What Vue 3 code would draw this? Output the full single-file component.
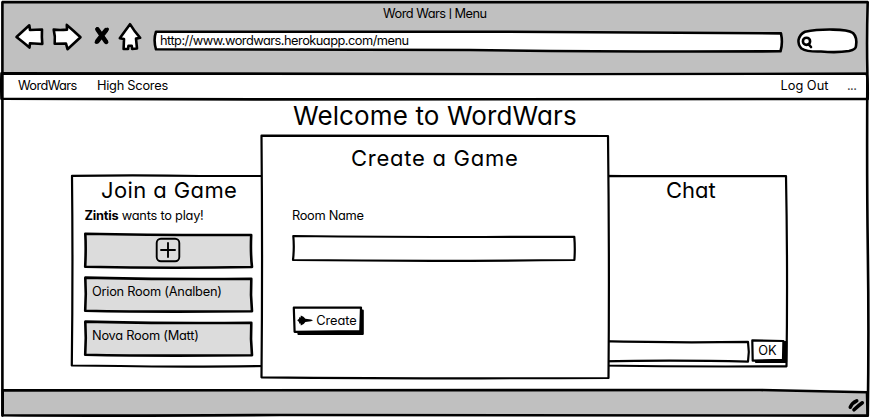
<script setup>
const rooms = [
  { id: 'orion', label: 'Orion Room (Analben)' },
  { id: 'nova', label: 'Nova Room (Matt)' },
]
</script>

<template>
  <div class="window">
    <header class="chrome">
      <div class="title">Word Wars <span class="bar-glyph">|</span> Menu</div>
      <div class="toolbar">
        <svg class="ink back" viewBox="14 22 32 30">
          <path class="paper" d="M16.5 37 L29.3 25.3 L30 30 Q36 29.8 42 29.5 Q41.6 37 42.3 44 L30 43.2 L29.5 47.6 Q23 42 16.5 37Z" />
        </svg>
        <svg class="ink forward" viewBox="51 22 32 30">
          <path class="paper" d="M53.7 29.6 Q60 30.4 67 29.6 L66.8 24.9 Q74 31 80.5 37.2 L67.5 49.2 L66 43.6 L54.7 43.8 Q55.4 36 53.7 29.6Z" />
        </svg>
        <svg class="ink stop" viewBox="92 22 20 30">
          <path d="M97 28.7 L106.7 42.3 M107.4 29.2 L96.2 42.2" />
          <path class="fat" d="M97.5 29.5 L106 41.8 M106 30.3 L97.3 41.2" />
        </svg>
        <svg class="ink home" viewBox="117 22 26 30">
          <path class="paper" d="M130 24.2 Q134 31 140.2 37.8 L136 38.6 L137 48.5 L132.2 49 L131.7 45.7 L128.5 45.7 L128 49 L123.6 49 L124 39 L119.8 38.2 Q125 31 130 24.2Z" />
        </svg>
        <div class="address">
          <svg class="ink cover" viewBox="154 31 629 21">
            <path class="paper" d="M156 31.7 Q330 32.3 500 31.7 Q650 32 781 33.4 Q783 43 780.5 51.3 Q600 52 470 50 L156 49.3 Q153.2 40 156 31.7Z" />
          </svg>
          <span class="url">http://www.wordwars.herokuapp.com/menu</span>
        </div>
        <svg class="ink search" viewBox="796 26 63 29">
          <path class="paper" d="M805 31.8 Q817 29.3 833 29.6 Q848 29.7 853 33 Q857.5 37.5 856 46 Q856 49.5 849 51 Q837 53 821 51.5 Q807 52 801.5 48.5 Q798 45 798.5 40 Q800 34 805 31.8Z" />
          <circle cx="806.5" cy="41.3" r="3.6" />
          <path d="M808.5 44.2 L811 47" />
        </svg>
      </div>
    </header>

    <nav class="menu">
      <svg class="ink cover" viewBox="0 72 870 28">
        <path class="paper" d="M1.5 73.4 Q300 72.6 580 74 L866.5 73.6 Q868 76 867.7 98.9 Q500 99.3 270 99.4 Q130 99.6 1.5 98.8 Q1 85 1.5 73.4Z" />
      </svg>
      <a class="brand">WordWars</a>
      <a class="scores">High Scores</a>
      <a class="logout">Log Out</a>
      <a class="more">...</a>
    </nav>

    <main>
      <h1>Welcome to WordWars</h1>
      <div class="lobby">
        <section class="panel join">
          <svg class="ink thin cover" viewBox="71 175 199 192">
            <path class="paper" d="M72 175.8 Q140 174.7 200 176 L270 176 V366 Q180 367.2 120 366 L71.8 365.5 Q73 270 72 175.8Z" />
          </svg>
          <h2>Join a Game</h2>
          <p class="invite"><b>Zintis</b> <span>wants to play!</span></p>
          <button class="room add">
            <svg class="ink cover" viewBox="0 0 169 35">
              <path class="shade" d="M1.3 0.8 Q70 2.3 167.2 2 Q166.4 20 168 34 Q85 35.6 1.2 33.7 Q2.1 15 1.3 0.8Z" />
            </svg>
            <svg class="plus" viewBox="0 0 26 26">
              <rect x="1.7" y="1.7" width="22.6" height="22.6" rx="4.2" />
              <path d="M13 5.3 V20.7 M5.3 13 H20.7" />
            </svg>
          </button>
          <button v-for="room in rooms" :key="room.id" class="room">
            <svg class="ink cover" viewBox="0 0 169 35">
              <path class="shade" d="M1.3 0.6 Q65 2.5 167.3 1.8 Q166.4 18 168 34.2 Q75 35.3 1.2 33.8 Q2.3 17 1.3 0.6Z" />
            </svg>
            <span>{{ room.label }}</span>
          </button>
        </section>

        <section class="panel chat">
          <svg class="ink thin cover" viewBox="600 175 188 192">
            <path class="paper" d="M600 175.8 Q680 176.5 786 176 Q787.8 270 786.5 366.3 Q690 367 600 365.5Z" />
          </svg>
          <h2>Chat</h2>
          <div class="composer">
            <div class="message">
              <svg class="ink thin cover" viewBox="600 340 149 23">
                <path class="paper" d="M600 341.2 Q680 343 748 341.8 Q749.6 352 748 361.6 Q680 360 600 361.3Z" />
              </svg>
            </div>
            <button class="ok">
              <svg class="ink thin cover" viewBox="751 339 37 26">
                <path class="solid" d="M756 343 L786.2 342 L786 362 L756 362Z" />
                <path class="paper" d="M752.3 340.4 L783.4 341 L783 359.8 L752.7 360.6Z" />
              </svg>
              <span>OK</span>
            </button>
          </div>
        </section>
      </div>
    </main>

    <footer class="status">
      <svg class="ink cover" viewBox="0 388 870 29">
        <path class="bar" d="M2.7 390.4 Q400 391 760 390 L867 392.3 L867.6 415.6 Q600 416 280 415 Q90 416 2.7 415.3Z" />
        <path class="grip" d="M850.3 407.2 Q852 402.8 856.7 400.8 M854 409.8 Q858.5 405.6 862.3 402.8" />
      </svg>
    </footer>

    <svg class="ink cover frame" viewBox="0 0 870 418">
      <path d="M2.7 2.3 H867.6 M867.7 2.3 Q866.6 40 867.4 72 Q866.7 170 867.8 250 Q869 330 867.8 415.6 M2.4 2.3 Q3.2 200 2.4 415.6" />
    </svg>

    <div class="dialog" role="dialog">
      <svg class="ink thin cover" viewBox="260 134 350 245">
        <path class="paper" d="M261.5 135.7 Q420 135.3 608 136 Q609.5 260 608.5 378 Q420 378.8 261.5 377.3 Q262.6 260 261.5 135.7Z" />
      </svg>
      <h2>Create a Game</h2>
      <label>Room Name</label>
      <div class="field">
        <svg class="ink thin cover" viewBox="292 235 284 27">
          <path class="paper" d="M293.3 236 Q420 237.4 574.3 236.8 Q575.2 248 574.4 260 Q430 261.6 293 260 Q294.4 248 293.3 236Z" />
        </svg>
      </div>
      <button class="create">
        <svg class="ink thin cover" viewBox="293 306 72 30">
          <path class="solid" d="M298.5 310.5 H362.7 V334 H298.5Z" />
          <path class="paper" d="M293.8 307.7 L361 307.5 L360.3 331 L294.6 331.8Z" />
        </svg>
        <svg class="jet" viewBox="297 315 17 13">
          <path d="M297.2 321.3 L299 319.8 L299.2 318.2 L300.6 318.4 L300.8 316.4 Q303.8 317.3 305.4 319.8 L311 320.4 L313 321.3 L311 322.2 L305.4 323 Q303.8 325.8 300.8 326.4 L300.6 324.4 L299.2 324.5 L299 323Z" />
        </svg>
        <span>Create</span>
      </button>
    </div>
  </div>
</template>

<style>
body { background: #fff; }
</style>

<style scoped>
.window {
  position: relative;
  display: flex;
  flex-direction: column;
  width: 870px;
  height: 418px;
  overflow: hidden;
  background: #fff;
  color: #000;
  font-family: Inter, "Liberation Sans", sans-serif;
  font-feature-settings: "cv11" 1;
  font-size: 12.8px;
  line-height: 16px;
  white-space: nowrap;
}
h1, h2, p { margin: 0; font-weight: 400; }
button {
  position: relative;
  display: flex;
  align-items: center;
  border: 0;
  padding: 0;
  background: none;
  color: inherit;
  font: inherit;
  font-feature-settings: inherit;
}
.ink {
  flex: none;
  overflow: visible;
  fill: none;
  stroke: #000;
  stroke-width: 2.6;
  stroke-linejoin: round;
  stroke-linecap: round;
}
.thin { stroke-width: 2.2; }
.cover { position: absolute; inset: 0; width: 100%; height: 100%; }
.cover ~ span, .cover ~ a, .cover ~ h2, .cover ~ p, .cover ~ label, .plus, .jet { position: relative; }
.paper { fill: #fff; }
.shade { fill: #dcdcdc; }
.bar { fill: #c0c0c0; }
.solid { fill: #000; }
.frame { pointer-events: none; }

.chrome {
  height: 72px;
  margin: 0 2px;
  box-sizing: border-box;
  padding-top: 6px;
  background: #c0c0c0;
}
.title { padding-left: 381px; letter-spacing: -0.5px; }
.bar-glyph { font-size: 9px; font-weight: 600; vertical-align: 0.6px; line-height: 1; }
.toolbar { display: flex; align-items: flex-start; padding: 0 0 0 12px; }
.back, .forward { width: 32px; height: 30px; }
.forward { margin-left: 5px; }
.stop { width: 20px; height: 30px; margin-left: 9px; stroke-width: 3.2; }
.fat { stroke-width: 4.6; }
.home { width: 26px; height: 30px; margin-left: 5px; }
.address { position: relative; width: 629px; height: 21px; margin: 9px 0 0 11px; }
.url { display: block; padding: 1.5px 0 0 6px; letter-spacing: -0.51px; }
.search { width: 63px; height: 29px; margin: 4px 0 0 13px; }

.menu {
  position: relative;
  display: flex;
  height: 28px;
  box-sizing: border-box;
  padding: 6.3px 14px 0 18px;
}
.brand { width: 79px; letter-spacing: -0.6px; }
.scores { letter-spacing: -0.25px; }
.logout { width: 66.5px; margin-left: auto; }
.more { width: 9px; color: #444; letter-spacing: -0.6px; }

main { flex: 1; }
h1 {
  height: 32px;
  padding-left: 293px;
  font-size: 26px;
  line-height: 32px;
  letter-spacing: 0.12px;
}
.lobby { display: flex; justify-content: space-between; padding: 43px 82px 0 71px; }
h2 { font-size: 22px; line-height: 28px; }
.panel { position: relative; height: 192px; box-sizing: border-box; padding-top: 1px; }
.join { width: 199px; padding-left: 13px; }
.join h2 { padding-left: 17px; letter-spacing: 0.4px; }
.invite { margin: 4.3px 0 8.9px 0.5px; height: 16px; letter-spacing: -0.23px; }
.room { width: 169px; height: 35px; margin-bottom: 8.7px; padding-left: 8px; letter-spacing: -0.24px; }
.room span { padding-bottom: 4.6px; }
.room.add { justify-content: center; padding: 0 1px 0 0; }
.plus { width: 26px; height: 26px; margin-top: -1px; fill: none; stroke: #000; stroke-width: 1.9; }
.chat { width: 188px; display: flex; flex-direction: column; }
.chat h2 { padding-left: 66px; }
.composer { display: flex; margin-top: auto; padding-bottom: 2px; }
.message { position: relative; width: 149px; height: 23px; margin-top: 1px; }
.ok { width: 37px; height: 26px; margin-left: 2px; padding: 0 0 3px 7.3px; }

.status { position: relative; flex: none; height: 29px; margin-bottom: 1px; }
.grip { stroke-width: 3.6; }

.dialog {
  position: absolute;
  left: 260px;
  top: 134px;
  width: 350px;
  height: 245px;
  box-sizing: border-box;
  padding: 10px 0 0 32px;
}
.dialog h2 { padding-left: 59px; letter-spacing: 0.74px; }
label { display: block; margin-top: 36.3px; letter-spacing: -0.3px; }
.field { position: relative; width: 284px; height: 27px; margin-top: 10.7px; }
.create { width: 72px; height: 30px; margin: 44px 0 0 1px; padding-left: 4px; }
.jet { width: 17px; height: 13px; fill: #000; }
.create span { margin-left: 2.2px; letter-spacing: -0.05px; }
</style>
